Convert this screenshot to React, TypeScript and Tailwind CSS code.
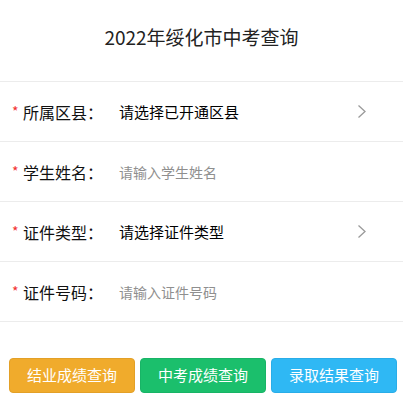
type Field = {
  label: string;
  value: string;
  kind: "select" | "input";
};

const fields: Field[] = [
  { label: "所属区县", value: "请选择已开通区县", kind: "select" },
  { label: "学生姓名", value: "请输入学生姓名", kind: "input" },
  { label: "证件类型", value: "请选择证件类型", kind: "select" },
  { label: "证件号码", value: "请输入证件号码", kind: "input" },
];

const font = { fontFamily: '"Noto Sans CJK SC", "Liberation Sans", sans-serif' };

function Arrow() {
  return (
    <svg width="10" height="15" viewBox="0 0 10 15" fill="none" className="shrink-0">
      <polyline points="1.5,1.5 8,7.5 1.5,13.5" stroke="#9a9a9a" strokeWidth="1.3" />
    </svg>
  );
}

export default function App() {
  return (
    <div className="w-[403px] h-[400px] bg-white" style={font}>
      <header className="flex h-[81px] items-center justify-center pb-[8px]">
        <h1 className="text-[19px] leading-none text-[#222]">2022年绥化市中考查询</h1>
      </header>

      <ul className="border-t border-[#ececec]">
        {fields.map((f) => (
          <li key={f.label} className="flex h-[60px] items-center border-b border-[#ececec] pl-[12px] pr-[36px]">
            <span className="mb-[2px] w-[11px] text-[14px] leading-none text-[#f23030]">*</span>
            <span className="w-[96px] text-[16px] leading-none text-[#111]">{f.label}：</span>
            {f.kind === "select" ? (
              <span className="flex-1 text-[15px] leading-none text-[#000]">{f.value}</span>
            ) : (
              <input
                placeholder={f.value}
                className="flex-1 bg-transparent text-[14px] leading-none text-[#111] outline-none placeholder:text-[#8f8f8f]"
              />
            )}
            {f.kind === "select" ? <Arrow /> : null}
          </li>
        ))}
      </ul>

      <div className="mt-[36px] flex gap-[5px] pl-[9px] pr-[6px]">
        <button className="h-[35px] flex-1 rounded-[4px] border border-[#e3a027] bg-[#f0ab2c] text-[15px] text-white">
          结业成绩查询
        </button>
        <button className="h-[35px] flex-1 rounded-[4px] border border-[#18b466] bg-[#1bbf6c] text-[15px] text-white">
          中考成绩查询
        </button>
        <button className="h-[35px] flex-1 rounded-[4px] border border-[#29ade8] bg-[#2fb8f4] text-[15px] text-white">
          录取结果查询
        </button>
      </div>
    </div>
  );
}
